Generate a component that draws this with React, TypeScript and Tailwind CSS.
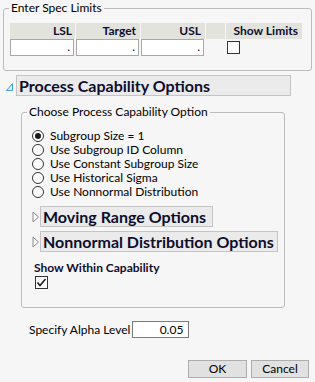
import { ReactNode } from "react";

const font = "font-['Lato','Noto_Sans',sans-serif]";

function Radio({ checked, label }: { checked?: boolean; label: string }): ReactNode {
    return (
        <div className="flex items-center h-[14px]">
            <div className="w-[12px] h-[12px] rounded-full border border-[#333333] bg-white flex items-center justify-center">
                {checked && <div className="w-[6px] h-[6px] rounded-full bg-[#1a1a1a]" />}
            </div>
            <span className="ml-[6px] text-[12px] leading-[14px] text-black">{label}</span>
        </div>
    );
}

function Outline({ label, width }: { label: string; width: string }): ReactNode {
    return (
        <div className="flex items-center">
            <svg width="8" height="12" viewBox="0 0 8 12" className="shrink-0">
                <polygon points="1,1 6.5,6 1,11" fill="#ffffff" stroke="#8a8a8a" strokeWidth="1" />
            </svg>
            <div className={`${width} h-[21px] bg-[#ebebeb] border border-[#c4c4c4] flex items-center pl-[2px]`}>
                <span className="text-[16px] font-bold text-[#0d0d2e] leading-[20px]">{label}</span>
            </div>
        </div>
    );
}

export default function App(): ReactNode {
    return (
        <div className={`w-[315px] h-[382px] bg-[#f6f6f6] overflow-hidden ${font} text-black`}>
            <fieldset className="ml-[3px] w-[309px] border border-[#bcbcbc] rounded-[3px] pb-[14px]">
                <legend className="ml-[5px] px-[2px] text-[12px] leading-[16px]">Enter Spec Limits</legend>
                <div className="ml-[6px] mt-[7px] grid grid-cols-[65px_64px_64px_19px_76px] gap-x-[1px]">
                    <div className="h-[16px] bg-[#e3e3de] text-right pr-[3px] text-[12px] font-bold leading-[16px] text-[#0d0d2e]">LSL</div>
                    <div className="h-[16px] bg-[#e3e3de] text-right pr-[4px] text-[12px] font-bold leading-[16px] text-[#0d0d2e]">Target</div>
                    <div className="h-[16px] bg-[#e3e3de] text-right pr-[4px] text-[12px] font-bold leading-[16px] text-[#0d0d2e]">USL</div>
                    <div className="h-[16px] bg-[#e3e3de]" />
                    <div className="h-[16px] bg-[#e3e3de] text-right pr-[4px] text-[12px] font-bold leading-[16px] text-[#0d0d2e]">Show Limits</div>

                    <div className="h-[17px] w-[64px] bg-white border border-[#a8a8a8] text-right pr-[3px] text-[12px] leading-[14px]">.</div>
                    <div className="h-[17px] w-[63px] bg-white border border-[#a8a8a8] text-right pr-[3px] text-[12px] leading-[14px]">.</div>
                    <div className="h-[17px] w-[63px] bg-white border border-[#a8a8a8] text-right pr-[3px] text-[12px] leading-[14px]">.</div>
                    <div />
                    <div className="h-[17px] flex items-center">
                        <div className="ml-[1px] w-[13px] h-[13px] bg-white border border-[#333333]" />
                    </div>
                </div>
            </fieldset>

            <div className="mt-[4px] flex items-center">
                <svg width="16" height="12" viewBox="0 0 16 12" className="shrink-0">
                    <polygon points="6.5,10.5 12.5,3.5 12.5,10.5" fill="#d7ebf8" stroke="#4a9ad4" strokeWidth="1" />
                </svg>
                <div className="w-[275px] h-[21px] bg-[#ebebeb] border border-[#c4c4c4] flex items-center pl-[2px]">
                    <span className="text-[16px] font-bold text-[#0d0d2e] leading-[20px]">Process Capability Options</span>
                </div>
            </div>

            <fieldset className="ml-[21px] mt-[8px] w-[264px] border border-[#bcbcbc] rounded-[3px] pb-[18px] pl-[10px]">
                <legend className="ml-[-5px] px-[2px] text-[12px] leading-[16px]">Choose Process Capability Option</legend>
                <div className="mt-[9px] flex flex-col">
                    <Radio checked label="Subgroup Size = 1" />
                    <Radio label="Use Subgroup ID Column" />
                    <Radio label="Use Constant Subgroup Size" />
                    <Radio label="Use Historical Sigma" />
                    <Radio label="Use Nonnormal Distribution" />
                </div>
                <div className="mt-[7px] flex flex-col gap-[4px]">
                    <Outline label="Moving Range Options" width="w-[173px]" />
                    <Outline label="Nonnormal Distribution Options" width="w-[238px]" />
                </div>
                <div className="mt-[9px] ml-[2px] text-[12px] font-bold leading-[14px] text-[#0d0d2e]">Show Within Capability</div>
                <div className="mt-[1px] ml-[3px] w-[13px] h-[13px] bg-white border border-[#333333] flex items-center justify-center">
                    <svg width="11" height="11" viewBox="0 0 11 11">
                        <polyline points="1.5,5.5 4,8.5 9.5,2" fill="none" stroke="#1a1a1a" strokeWidth="1.6" />
                    </svg>
                </div>
            </fieldset>

            <div className="mt-[13px] ml-[29px] flex items-center">
                <span className="text-[12px] leading-[14px]">Specify Alpha Level</span>
                <div className="ml-[2px] w-[57px] h-[17px] bg-white border border-[#7a7a7a] text-right pr-[5px] text-[12px] leading-[15px]">0.05</div>
            </div>

            <div className="mt-[22px] mr-[6px] flex justify-end gap-[4px]">
                <button className="w-[59px] h-[18px] bg-[#e1e1e1] border border-[#adadad] text-[12px] leading-[14px]">OK</button>
                <button className="w-[58px] h-[18px] bg-[#e1e1e1] border border-[#adadad] text-[12px] leading-[14px]">Cancel</button>
            </div>
        </div>
    );
}
